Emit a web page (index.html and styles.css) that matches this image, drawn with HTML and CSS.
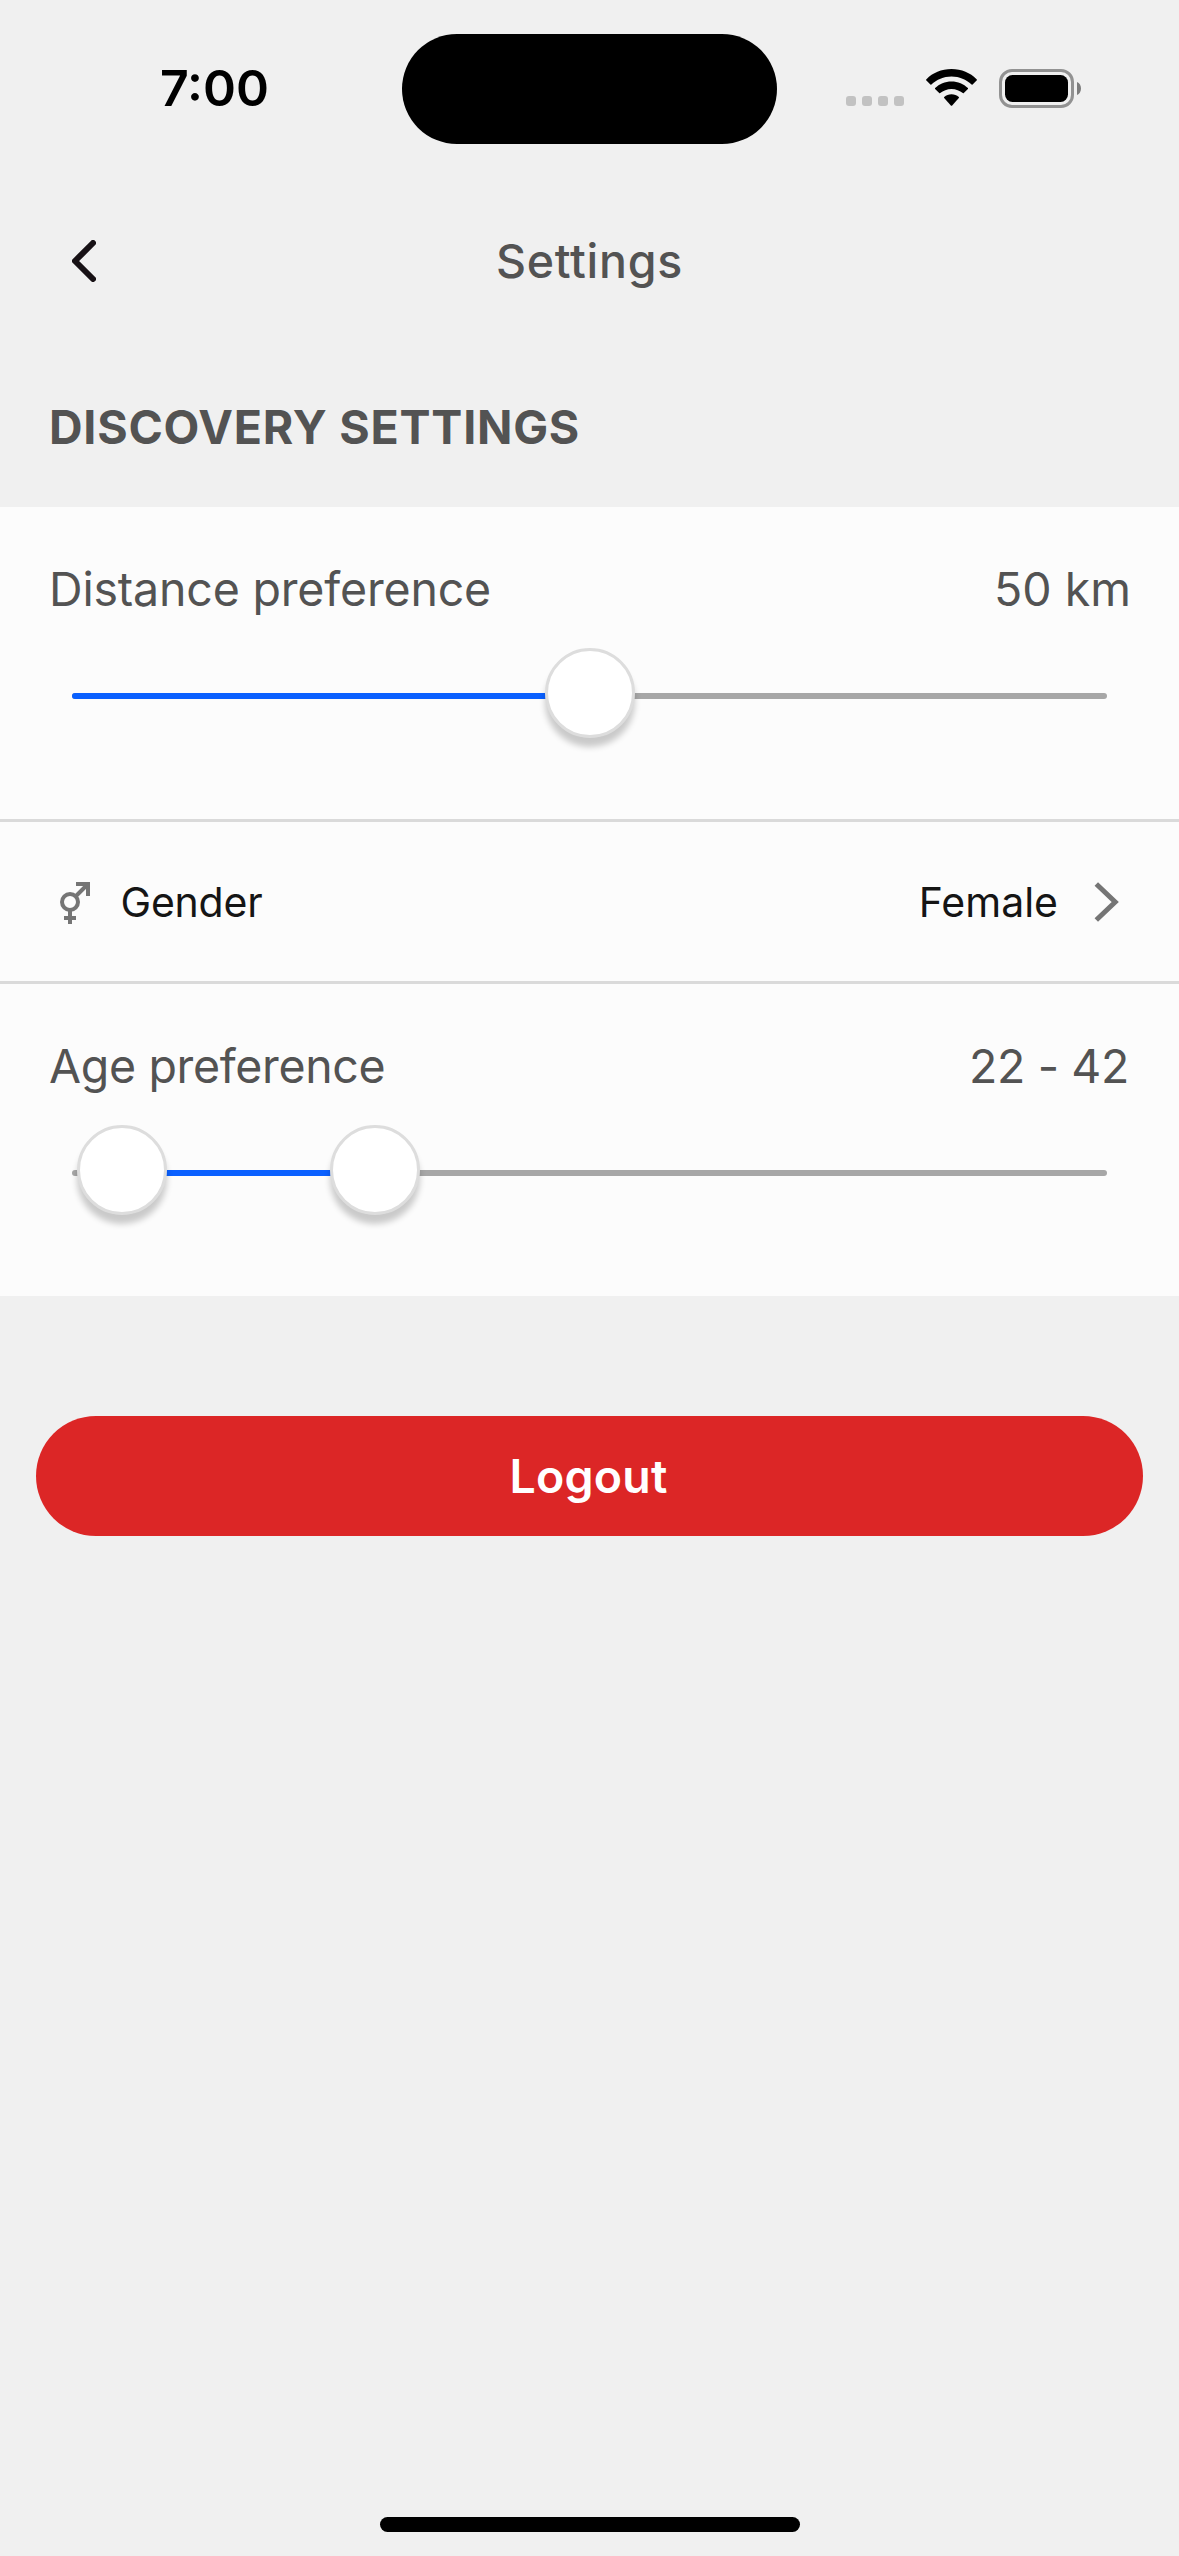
FILE: index.html
```html
<!DOCTYPE html>
<html lang="en">
<head>
<meta charset="utf-8">
<title>Settings</title>
<link rel="stylesheet" href="styles.css">
</head>
<body>
<main class="screen">
  <div class="status-bar">
    <div class="status-time"><span class="time">7:00</span></div>
    <div class="island"></div>
    <div class="status-icons">
      <div class="cell-dots"><i></i><i></i><i></i><i></i></div>
      <svg class="wifi" viewBox="0 0 51 38" width="51" height="38">
        <path d="M25.5 0C35.6 0 44.400 3.900 50.300 10L51 10.800Q51 11.200 50.600 11.600L46.600 15.500Q46.100 15.900 45.600 15.400C40.300 10.400 33.300 7.400 25.500 7.400S10.700 10.400 5.400 15.400Q4.900 15.900 4.400 15.500L.4 11.600Q0 11.200 0 10.800L.7 10C6.600 3.900 15.400 0 25.500 0Z"/>
        <path d="M25.500 12.500C31.900 12.500 37.700 15 41.900 19.100Q42.300 19.600 41.900 20.100L37.800 24.100Q37.300 24.600 36.800 24.100C33.800 21.500 29.900 19.900 25.500 19.900S17.200 21.500 14.200 24.100Q13.700 24.600 13.200 24.100L9.100 20.100Q8.700 19.600 9.100 19.100C13.300 15 19.100 12.500 25.500 12.500Z"/>
        <path d="M25.500 25.200C28.300 25.200 30.800 26.200 32.800 27.900Q33.300 28.400 32.800 29L26.200 36.500Q25.500 37.200 24.800 36.500L18.200 29Q17.700 28.400 18.200 27.900C20.200 26.200 22.700 25.200 25.500 25.200Z"/>
      </svg>
      <svg class="battery" viewBox="0 0 82 39" width="82" height="39">
        <rect x="1.500" y="1.500" width="72" height="36" rx="11.500" fill="none" stroke="#929292" stroke-width="3"/>
        <rect x="6" y="6" width="63" height="27" rx="7.500"/>
        <path d="M78 13C80.600 14 82 16.600 82 19.500S80.600 25 78 26Z" fill="#7d7d7d"/>
      </svg>
    </div>
  </div>

  <header class="header">
    <svg class="back" viewBox="0 0 24 42" width="24" height="42">
      <path d="M21 3L3 21L21 39"/>
    </svg>
    <h1 class="title">Settings</h1>
  </header>

  <h2 class="section-title">DISCOVERY SETTINGS</h2>

  <section class="panel">
    <div class="preference">
      <div class="preference-head">
        <span class="distance-label">Distance preference</span>
        <span>50 km</span>
      </div>
      <div class="slider">
        <div class="range" style="left:0;width:518px"></div>
        <div class="thumb" style="left:473px"></div>
      </div>
    </div>
    <div class="gender-row">
      <svg class="gender-icon" viewBox="0 0 30 42" width="30" height="42">
        <circle cx="10" cy="20" r="8"/>
        <path d="M15.500 14.500L27 3M16 2H28V14M10 28V42M4 36H16"/>
      </svg>
      <span class="gender-label">Gender</span>
      <span>Female</span>
      <svg class="chevron" viewBox="0 0 25 40" width="25" height="40">
        <path d="M2.300 2L21.200 20L2.300 38"/>
      </svg>
    </div>
    <div class="preference">
      <div class="preference-head">
        <span class="age-label">Age preference</span>
        <span class="age-value">22 - 42</span>
      </div>
      <div class="slider">
        <div class="range" style="left:50px;width:253px"></div>
        <div class="thumb" style="left:5px"></div>
        <div class="thumb" style="left:258px"></div>
      </div>
    </div>
  </section>

  <button class="logout" type="button">Logout</button>
  <div class="home-indicator"></div>
</main>
</body>
</html>
```
FILE: styles.css
```css
* { box-sizing: border-box; margin: 0; padding: 0; }

body {
  background: #f0f0f0;
  font-family: Inter, "Liberation Sans", sans-serif;
  color: #535353;
}

.screen {
  width: 1179px;
  height: 2556px;
  display: flex;
  flex-direction: column;
  overflow: hidden;
}

.status-bar {
  height: 177px;
  display: grid;
  grid-template-columns: 402px 375px 402px;
  align-items: center;
  flex: none;
}
.status-time { padding: 0 0 1px 160px; color: #000; }
.time { display: block; font-size: 50px; font-weight: 600; line-height: 60px; }
.island { height: 110px; margin-top: 1px; border-radius: 55px; background: #000; }
.status-icons { display: flex; padding-left: 69px; }
.cell-dots { display: flex; gap: 6px; width: 80px; padding-top: 27px; }
.cell-dots i { width: 10px; height: 10px; border-radius: 3px; background: #c2c2c2; }
.battery { margin-left: 22px; }

.header {
  height: 168px;
  display: grid;
  grid-template-columns: 96px 1fr 96px;
  align-items: center;
  flex: none;
}
.back { justify-self: end; fill: none; stroke: #171115; stroke-width: 6; stroke-linecap: round; stroke-linejoin: round; }
.title { text-align: center; font-size: 46.5px; font-weight: 500; line-height: 60px; letter-spacing: .7px; }

.section-title {
  height: 162px;
  padding: 52px 49px 50px;
  font-size: 46.5px;
  font-weight: 700;
  line-height: 60px;
  letter-spacing: .77px;
  flex: none;
}

.panel { background: #fcfcfc; flex: none; }
.preference { height: 312px; padding: 52px 48px 0 49px; }
.preference-head { display: flex; justify-content: space-between; font-size: 46.5px; line-height: 60px; }
.distance-label { letter-spacing: -.18px; }
.age-label { letter-spacing: -.34px; }
.age-value { letter-spacing: -.38px; padding-right: 2px; }

.slider { position: relative; height: 6px; margin: 74px 24px 0 23px; border-radius: 3px; background: #a7a7a7; }
.range { position: absolute; top: 0; height: 6px; border-radius: 3px; background: #0a60ff; }
.thumb {
  position: absolute;
  top: -45px;
  width: 90px;
  height: 90px;
  border: 3px solid #ddd;
  border-radius: 50%;
  background: #fff;
  box-shadow: 0 9px 6px rgba(0, 0, 0, .2);
}

.gender-row {
  height: 165px;
  padding: 0 60px;
  display: flex;
  align-items: center;
  border-top: 3px solid #dadada;
  border-bottom: 3px solid #dadada;
  font-size: 41px;
  line-height: 54px;
  color: #151515;
}
.gender-icon { margin-top: 3px; fill: none; stroke: #757575; stroke-width: 4; }
.gender-label { flex: 1; margin-left: 30.5px; letter-spacing: -.2px; }
.chevron { margin: 1px 0 0 36px; fill: none; stroke: #757575; stroke-width: 5; }

.logout {
  height: 120px;
  margin: 120px 36px 0;
  border: 0;
  border-radius: 60px;
  background: #dc2626;
  color: #fff;
  font: 600 46.5px/60px Inter, "Liberation Sans", sans-serif;
  letter-spacing: .18px;
  padding-right: 2px;
  flex: none;
}

.home-indicator { width: 420px; height: 15px; margin: auto auto 24px; border-radius: 8px; background: #000; flex: none; }
```
